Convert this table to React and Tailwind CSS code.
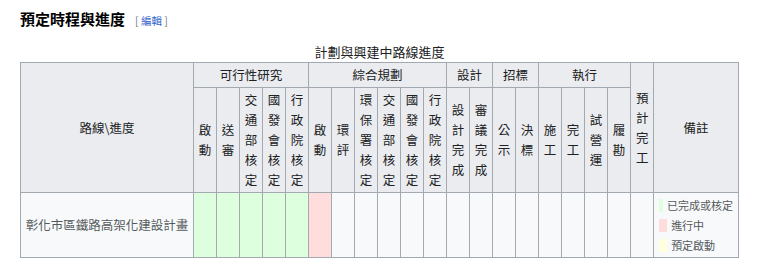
import React from "react";

const GROUPS = [
  { name: "可行性研究", cols: ["啟動", "送審", "交通部核定", "國發會核定", "行政院核定"] },
  { name: "綜合規劃", cols: ["啟動", "環評", "環保署核定", "交通部核定", "國發會核定", "行政院核定"] },
  { name: "設計", cols: ["設計完成", "審議完成"] },
  { name: "招標", cols: ["公示", "決標"] },
  { name: "執行", cols: ["施工", "完工", "試營運", "履勘"] },
];

// 0-4 done, 5 in progress
const STATUS = ["done", "done", "done", "done", "done", "doing"];

const LEGEND = [
  { color: "bg-[#ddffdd]", label: "已完成或核定" },
  { color: "bg-[#ffdddd]", label: "進行中" },
  { color: "bg-[#ffffdd]", label: "預定啟動" },
];

const th = "border border-[#a2a9b1] bg-[#eaecf0] px-[5px] py-[2px] text-center align-middle font-normal";

const Vertical = ({ text }) => (
  <div className="flex flex-col items-center">
    {text.split("").map((c, i) => (
      <span key={i}>{c}</span>
    ))}
  </div>
);

export default function App() {
  const allCols = GROUPS.flatMap((g) => g.cols);

  return (
    <div className="min-h-[266px] bg-white px-[20px] pt-[8px] font-['Noto_Sans_CJK_TC',sans-serif] text-[#202122]">
      <div className="flex items-baseline gap-[10px] leading-[22px]">
        <h3 className="text-[15px] font-bold text-black">預定時程與進度</h3>
        <span className="text-[10.5px] text-[#72777d]">
          [ <span className="text-[#3366cc]">編輯</span> ]
        </span>
      </div>

      <table className="mt-[9px] w-[719px] table-fixed border-collapse border border-[#a2a9b1] bg-[#f8f9fa] text-[12.5px] leading-[20px]">
        <caption className="text-[13px] leading-[21px]">計劃與興建中路線進度</caption>
        <colgroup>
          <col className="w-[173px]" />
          {allCols.map((_, i) => (
            <col key={i} className="w-[23px]" />
          ))}
          <col className="w-[23px]" />
          <col />
        </colgroup>
        <thead>
          <tr>
            <th rowSpan={2} className={th}>路線\進度</th>
            {GROUPS.map((g) => (
              <th key={g.name} colSpan={g.cols.length} className={th}>
                {g.name}
              </th>
            ))}
            <th rowSpan={2} className={`${th} px-0`}>
              <Vertical text="預計完工" />
            </th>
            <th rowSpan={2} className={th}>備註</th>
          </tr>
          <tr>
            {allCols.map((c, i) => (
              <th key={i} className={`${th} px-0`}>
                <Vertical text={c} />
              </th>
            ))}
          </tr>
        </thead>
        <tbody>
          <tr>
            <td className="whitespace-nowrap border border-[#a2a9b1] px-0 py-[2px] text-center text-[#54595d]">
              彰化市區鐵路高架化建設計畫
            </td>
            {allCols.map((_, i) => (
              <td
                key={i}
                className={`border border-[#a2a9b1] ${
                  STATUS[i] === "done" ? "bg-[#ddffdd]" : STATUS[i] === "doing" ? "bg-[#ffdddd]" : ""
                }`}
              />
            ))}
            <td className="border border-[#a2a9b1]" />
            <td className="border border-[#a2a9b1] px-[5px] py-[2px] text-[11px] leading-[20px] text-[#54595d]">
              {LEGEND.map((l) => (
                <div key={l.label} className="flex items-center gap-[4px]">
                  <span className={`inline-block h-[13px] w-[8px] ${l.color}`} />
                  <span className="whitespace-nowrap">{l.label}</span>
                </div>
              ))}
            </td>
          </tr>
        </tbody>
      </table>
    </div>
  );
}
